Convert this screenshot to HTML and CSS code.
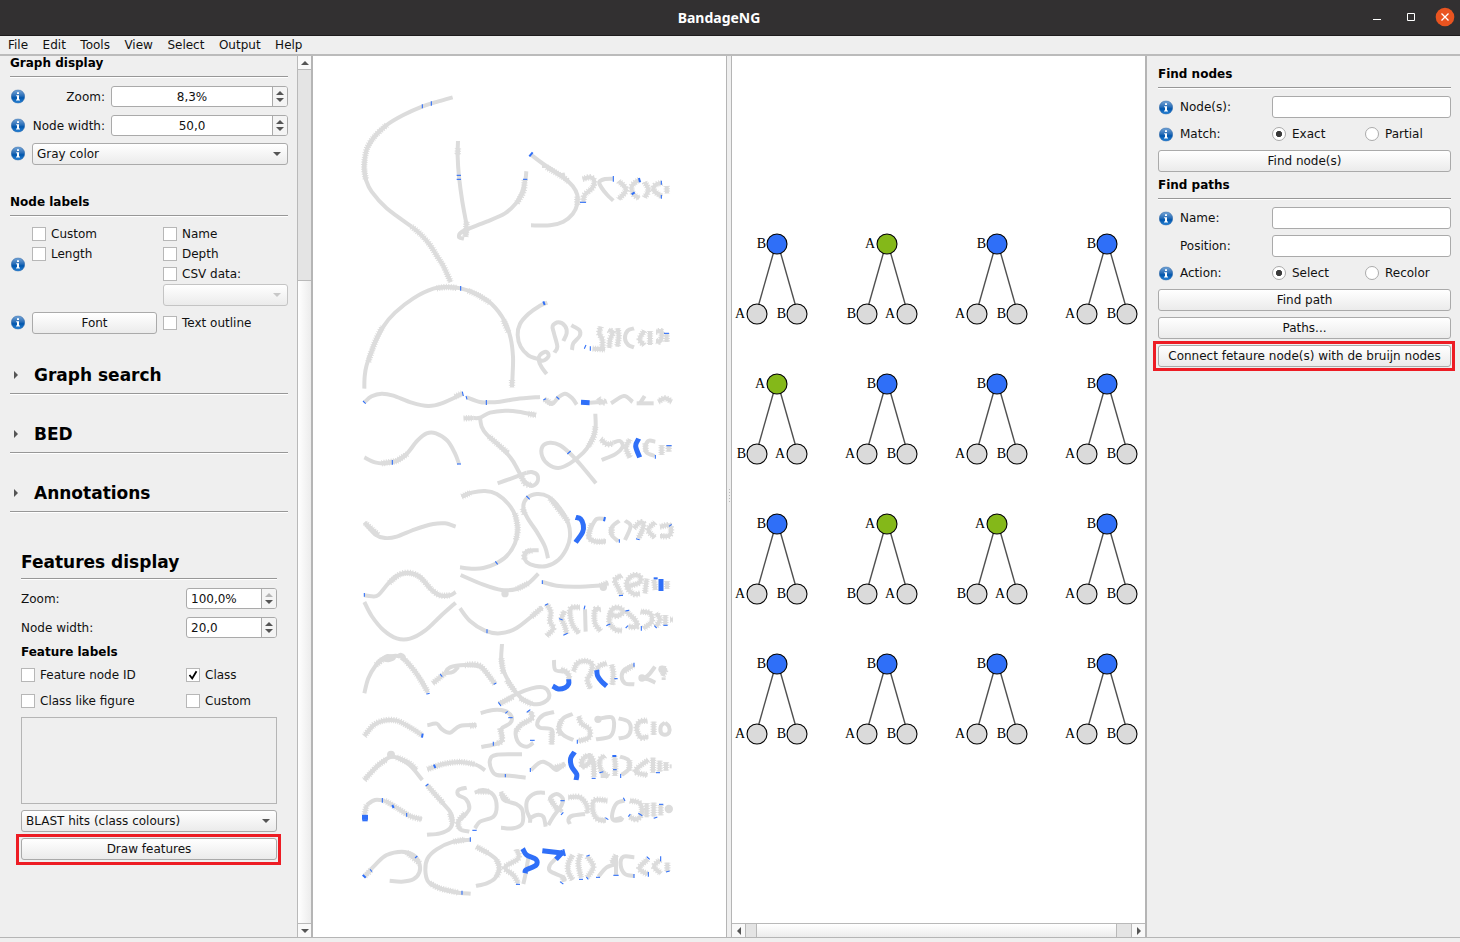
FILE: index.html
```html
<!DOCTYPE html>
<html lang="en">
<head>
<meta charset="utf-8">
<title>BandageNG</title>
<link rel="stylesheet" href="styles.css">
</head>
<body>
<svg class="defs" width="0" height="0">
  <defs>
    <linearGradient id="info-fill" x1="0" y1="0" x2="0" y2="1">
      <stop offset="0" stop-color="#78a7d8"/><stop offset=".45" stop-color="#2b6fb8"/><stop offset=".6" stop-color="#0056ad"/><stop offset="1" stop-color="#2c86d8"/>
    </linearGradient>
    <symbol id="info" viewBox="0 0 14 14">
      <circle cx="7" cy="7" r="6.7" fill="url(#info-fill)" stroke="#2c65a4" stroke-width=".5"/>
      <path d="M6 2.8h2v1.7H6zM5.2 5.7H8v4.2h1v1.2H5V9.9h1V6.8h-.8z" fill="#fff"/>
    </symbol>
    <symbol id="up" viewBox="0 0 8 4"><path d="M0 4L4 0l4 4z"/></symbol>
    <symbol id="down" viewBox="0 0 8 4"><path d="M0 0l4 4 4-4z"/></symbol>
    <symbol id="left" viewBox="0 0 4 8"><path d="M4 0L0 4l4 4z"/></symbol>
    <symbol id="right" viewBox="0 0 4 8"><path d="M0 0l4 4-4 4z"/></symbol>
  </defs>
</svg>
<div class="window">
  <header class="titlebar">
    <span class="side"></span>
    <span class="title">BandageNG</span>
    <span class="side controls">
      <svg width="90" height="36" viewBox="0 0 90 36"><path d="M7 19.5h8" stroke="#fff" fill="none"/><path d="M41.500 13.500h7v7h-7z" stroke="#fff" fill="none"/><circle cx="79" cy="17" r="9.300" fill="#e95420"/><path d="M75.500 13.500l7 7m0-7l-7 7" stroke="#fff" stroke-width="1.300"/></svg>
    </span>
  </header>
  <nav class="menubar"><span>File</span><span>Edit</span><span>Tools</span><span>View</span><span>Select</span><span>Output</span><span>Help</span></nav>
  <main class="work">
    <aside class="left">
      <h3>Graph display</h3>
      <div class="row r-zoom"><svg class="info"><use href="#info"/></svg><label class="rlabel">Zoom:</label><div class="spin center"><span>8,3%</span><i><svg><use href="#up"/></svg><svg><use href="#down"/></svg></i></div></div>
      <div class="row r-width"><svg class="info"><use href="#info"/></svg><label class="rlabel">Node width:</label><div class="spin center"><span>50,0</span><i><svg><use href="#up"/></svg><svg><use href="#down"/></svg></i></div></div>
      <div class="row r-color"><svg class="info"><use href="#info"/></svg><div class="combo"><span>Gray color</span><svg><use href="#down"/></svg></div></div>
      <h3 class="labels-title">Node labels</h3>
      <div class="row labels">
        <svg class="info"><use href="#info"/></svg>
        <div class="col"><div class="check"><b></b>Custom</div><div class="check"><b></b>Length</div></div>
        <div class="col"><div class="check"><b></b>Name</div><div class="check"><b></b>Depth</div><div class="check"><b></b>CSV data:</div><div class="combo off"><span></span><svg><use href="#down"/></svg></div></div>
      </div>
      <div class="row r-font"><svg class="info"><use href="#info"/></svg><div class="btn">Font</div><div class="check"><b></b>Text outline</div></div>
      <h2 class="first"><svg><use href="#right"/></svg>Graph search</h2>
      <h2><svg><use href="#right"/></svg>BED</h2>
      <h2><svg><use href="#right"/></svg>Annotations</h2>
      <section class="features">
        <h2>Features display</h2>
        <div class="row r-zoom"><label>Zoom:</label><div class="spin"><span>100,0%</span><i><svg class="dim"><use href="#up"/></svg><svg><use href="#down"/></svg></i></div></div>
        <div class="row r-width"><label>Node width:</label><div class="spin"><span>20,0</span><i><svg><use href="#up"/></svg><svg><use href="#down"/></svg></i></div></div>
        <h4>Feature labels</h4>
        <div class="checks">
          <div class="check"><b></b>Feature node ID</div><div class="check"><b><svg viewBox="0 0 12 12"><path d="M2.500 6l2.700 3.500L9.500 2.300" fill="none" stroke="#000" stroke-width="1.800"/></svg></b>Class</div>
          <div class="check"><b></b>Class like figure</div><div class="check"><b></b>Custom</div>
        </div>
        <div class="blank"></div>
        <div class="combo"><span>BLAST hits (class colours)</span><svg><use href="#down"/></svg></div>
        <div class="btn marked draw">Draw features</div>
      </section>
    </aside>
    <div class="vscroll"><i class="arrow"><svg><use href="#up"/></svg></i><i class="trough"></i><i class="thumb"></i><i class="arrow"><svg><use href="#down"/></svg></i></div>
    <div class="view graph"><svg id="graph" width="413" height="881" viewBox="313 56 413 881"></svg></div>
    <div class="splitter"><i></i></div>
    <div class="view trees">
      <svg id="trees" width="413" height="867" viewBox="732 56 413 867"></svg>
      <div class="hscroll"><i class="arrow"><svg><use href="#left"/></svg></i><i class="trough a"></i><i class="thumb"></i><i class="trough b"></i><i class="arrow"><svg><use href="#right"/></svg></i></div>
    </div>
    <aside class="find">
      <h3>Find nodes</h3>
      <div class="row r-input"><svg class="info"><use href="#info"/></svg><label>Node(s):</label><div class="input"></div></div>
      <div class="row r-radio"><svg class="info"><use href="#info"/></svg><label>Match:</label><div class="radio on"><b></b>Exact</div><div class="radio"><b></b>Partial</div></div>
      <div class="btn after-radio">Find node(s)</div>
      <h3 class="paths-title">Find paths</h3>
      <div class="row r-input"><svg class="info"><use href="#info"/></svg><label>Name:</label><div class="input"></div></div>
      <div class="row r-pos"><span class="info"></span><label>Position:</label><div class="input"></div></div>
      <div class="row r-radio"><svg class="info"><use href="#info"/></svg><label>Action:</label><div class="radio on"><b></b>Select</div><div class="radio"><b></b>Recolor</div></div>
      <div class="btn after-radio">Find path</div>
      <div class="btn">Paths...</div>
      <div class="btn marked">Connect fetaure node(s) with de bruijn nodes</div>
    </aside>
  </main>
  <footer class="status"></footer>
</div>
<script src="graph.js"></script>
</body>
</html>
```

FILE: styles.css
```css
* { box-sizing: border-box; }
body { margin: 0; font: 12px/14px "DejaVu Sans", sans-serif; color: #111; background: #efefef; }
svg { display: block; }
.defs { position: absolute; }
.window { display: flex; flex-direction: column; width: 1460px; height: 942px; overflow: hidden; }
.titlebar { display: flex; align-items: center; height: 36px; padding: 0 5px 0 0; background: #323031; border-bottom: 1px solid #1d1b1c; }
.side { flex: 1; display: flex; justify-content: flex-end; }
.side:first-child { margin-right: -17px; }
.title { color: #fff; font: bold 14px "Noto Sans", sans-serif; }
.controls svg { margin-right: -1px; }
.menubar { display: flex; height: 20px; padding: 1px 8px 0; gap: 14.500px; line-height: 16px; border-bottom: 2px solid #bbb; }
.work { display: flex; height: 881px; }
.status { height: 5px; border-top: 1px solid #b5b5b5; }

.left { width: 297px; padding: 0 9px 0 10px; }
h2, h3, h4 { margin: 0; font-weight: bold; color: #000; }
h3 { height: 21px; font-size: 12px; line-height: 15px; border-bottom: 1px solid #979797; box-shadow: 0 1px #fff; }
h2 { display: flex; align-items: center; height: 32px; margin-top: 27px; padding: 0 0 5px 4px; font-size: 17px; line-height: 26px; border-bottom: 1px solid #979797; box-shadow: 0 1px #fff; }
h2 svg { width: 4px; height: 8px; margin-right: 16px; fill: #555; }
h2.first { margin-top: 28px; }
h4 { height: 14px; margin-top: 7px; font-size: 12px; }
.row { display: flex; align-items: center; }
.row label { flex: none; white-space: nowrap; }
.info { flex: none; width: 14px; height: 14px; margin: 0 7px 0 1px; }
.left .info { margin: 0 8px 0 0; transform: translate(1px, -.5px); }
.find .info { transform: translate(0, .5px); }
.rlabel { width: 73px; margin-right: 6px; text-align: right; }
.r-zoom { height: 21px; margin-top: 9px; }
.r-width { height: 21px; margin-top: 8px; }
.r-color { height: 22px; margin-top: 7px; }
.labels-title { margin-top: 30px; }
.labels { margin-top: 8px; height: 82px; }
.col { align-self: stretch; width: 125px; }
.col + .col { margin-left: 6px; }
.col .check { height: 20px; }
.r-font { height: 22px; margin-top: 6px; }
.r-font .btn { width: 125px; margin: 0 6px 0 0; }

.spin { display: flex; flex: 1; height: 21px; background: #fff; border: 1px solid #aaa; border-radius: 3px; overflow: hidden; }
.spin span { flex: 1; padding-left: 4px; line-height: 21px; }
.spin.center span { text-align: center; padding: 0; }
.spin i { display: flex; flex-direction: column; align-items: center; justify-content: center; gap: 3px; width: 15px; border-left: 1px solid #aaa; background: #f4f4f4; }
.spin svg { width: 8px; height: 4px; fill: #555; }
.spin svg.dim { fill: #b5b5b5; }
.combo, .btn { height: 22px; border: 1px solid #aaa; border-radius: 3px; background: linear-gradient(#fff, #ebebeb); line-height: 19px; }
.combo { display: flex; flex: 1; align-items: center; justify-content: space-between; padding: 0 6px 0 4px; }
.combo svg { width: 8px; height: 4px; fill: #555; }
.combo.off { border-color: #c4c4c4; }
.combo.off svg { fill: #c8c8c8; }
.btn { text-align: center; margin-top: 6px; line-height: 21px; white-space: nowrap; }
.check { display: flex; align-items: center; height: 14px; white-space: nowrap; }
.check b { width: 14px; height: 14px; margin-right: 5px; border: 1px solid #b7b7b7; background: #fff; }
.features { padding: 0 11px; }
.features h2 { height: 30px; margin-top: 37px; padding: 0 0 4px; }
.features .row { justify-content: space-between; }
.features .spin { flex: none; width: 91px; }
.checks { display: grid; grid-template-columns: 165px 1fr; row-gap: 12px; margin-top: 9px; }
.blank { height: 87px; margin: 9px 0 6px; border: 1px solid #b5b5b5; }
.marked { position: relative; }
.marked::after { content: ""; position: absolute; inset: -5px -5px -5px -6px; border: 3px solid #ed1c24; }
.marked.draw::after { bottom: -6px; }

.arrow { display: flex; align-items: center; justify-content: center; background: #f9f9f9; }
.vscroll { display: flex; flex-direction: column; width: 16px; border-left: 1px solid #b9b9b9; border-right: 2px solid #b5b5b5; }
.vscroll .arrow { height: 13px; }
.vscroll .arrow svg { width: 8px; height: 4px; fill: #555; }
.vscroll .trough { height: 212px; border: 1px solid #b9b9b9; border-width: 1px 0; background: #e4e4e4; }
.vscroll .thumb { flex: 1; background: linear-gradient(90deg, #fff, #ececec); border-bottom: 1px solid #b9b9b9; }
.view { width: 413px; background: #fff; }
.splitter { display: flex; align-items: center; justify-content: center; width: 6px; border: 1px solid #b5b5b5; border-width: 0 1px; }
.splitter i { width: 1px; height: 15px; background: repeating-linear-gradient(#bbb 0 1px, transparent 1px 3px); }
.hscroll { display: flex; height: 14px; border-top: 1px solid #b9b9b9; }
.hscroll .arrow { width: 13px; }
.hscroll .arrow svg { width: 4px; height: 8px; fill: #555; }
.hscroll .trough { background: #e4e4e4; border: 1px solid #b9b9b9; border-width: 0 1px; }
.hscroll .a { width: 12px; }
.hscroll .b { width: 16px; }
.hscroll .thumb { flex: 1; background: linear-gradient(#fff, #ececec); }

.find { width: 315px; padding: 11px 9px 0 11px; border-left: 2px solid #b5b5b5; }
.find label { width: 92px; }
.find .row { height: 22px; }
.find .r-input { margin-top: 8px; }
.find .r-pos { margin-top: 6px; }
.find .r-radio { height: 14px; margin-top: 9px; }
.find .after-radio { margin-top: 9px; }
.paths-title { margin-top: 6px; }
.input { flex: 1; height: 22px; background: #fff; border: 1px solid #aaa; border-radius: 3px; }
.radio { display: flex; flex: none; align-items: center; width: 93px; }
.radio:last-child { width: 86px; }
.radio b { width: 14px; height: 14px; margin-right: 6px; border: 1px solid #aaa; border-radius: 50%; background: #fff; }
.radio.on b { background: radial-gradient(circle, #3a3a3a 0 2.800px, #fff 3.500px); }

#graph path { fill: none; }
.g { stroke: #dcdcdc; stroke-width: 12; }
.hair { stroke: #dcdcdc; stroke-width: 19; stroke-dasharray: 3 4; }
.b { stroke: #2f6ff8; stroke-width: 15; }
.t { stroke: #2f6ff8; stroke-width: 3.300; }
.edge { stroke: #505050; stroke-width: 1.400; }
.node { stroke: #000; stroke-width: 1.100; }
.node.A { fill: #84b819; }
.node.B { fill: #2f6ff8; }
.node.leaf { fill: #dadada; }
#trees text { font: 14px "Liberation Serif", serif; text-anchor: end; fill: #000; }
```

FILE: graph.js
```javascript
// Contigs by band; coordinates are thirds of a pixel from the band's top edge.
// g: plain contig, f: contig with short segments, b/w: highlighted contig, t: feature tick.
const bands = {
  80: `g 308,52 265,64 218,79 160,105 110,135 75,168 52,203
f 110,135 75,168 52,203 44,240 43,270 48,300
g 44,240 43,270 48,300 65,335 110,385 185,440
f 185,440 212,463 240,495 262,530 280,558 302,606
g 324,183 323,230 327,290 337,365 350,435
f 324,205 323,225
f 350,425 346,470
g 529,274 526,300 515,340 498,370 465,400 410,425 350,448 330,460 328,473 342,476
f 350,448 346,470
f 524,300 520,335 500,370
g 543,224 580,252 640,292 668,318 682,345 682,372 668,402 640,425 600,436 543,436
f 590,262 640,292 655,305
g 576,258 588,258
g 627,287 645,283
f 682,350 682,375
f 698,297 722,292 733,305 726,325 704,345 700,366
g 790,296 765,297 748,306 754,322 772,345 790,362
f 806,303 828,329 806,358
f 868,298 846,318 850,342 868,355
f 884,306 895,330 884,353
f 936,308 915,316 912,332 936,350
f 950,318 951,340
t 217,73 217,85
t 244,64 244,77
t 320,286 333,286
t 320,298 333,298
t 519,298 532,298
w 548,217 538,229
t 690,367 708,367
t 790,288 790,305
w 867,294 870,307
w 845,343 854,337
t 934,302 934,314
t 934,345 934,356`,
  270: `g 43,356 44,320 50,285 70,230 100,170 135,128 190,85 250,56 295,52 332,55 375,70 425,102 465,155 482,205 489,260 488,310 486,350
f 55,275 68,235 82,200 98,170
f 260,55 290,51 320,54
f 355,62 385,76 420,98
f 460,150 475,185
f 486,330 486,352
g 592,98 570,107 535,132 510,162 503,195 512,230 535,256 560,266 580,272 596,258 588,245 570,255 566,270 575,292 590,312
g 613,248 622,230 612,190 608,168 625,157 645,168 650,190 640,213
g 664,166 688,180 689,198 670,220 666,240
f 728,236 765,238
f 752,170 748,190 757,210 757,240
f 775,180 788,187 780,210 778,234
f 803,175 806,200 802,230
g 852,175 833,182 825,205 835,225 852,232
f 883,182 869,208 883,226
f 900,183 900,225
f 918,185 935,185 931,213 918,213
f 950,190 950,216
g 43,397 65,379 95,371 130,377 185,398 235,408 275,400 337,372
f 315,380 337,370
g 350,382 390,396 415,397 450,395 500,387 570,381
g 583,388 606,402 625,382 645,371 666,384 680,404
f 583,388 606,402
g 720,398 760,395
f 745,384 755,398 770,392
g 783,400 822,378 848,396
g 884,378 870,400
g 860,400 911,400
f 925,395 945,385 965,395
f 341,445 370,444
g 370,444 390,443 420,428 465,422 505,425 558,435
f 535,432 558,435
g 390,443 395,470 410,493 440,520 475,555 490,575 512,615 525,635 545,648 562,636 562,615 545,606 530,608
g 530,608 485,625 443,640
f 417,500 440,520 475,550
f 512,615 525,640 545,645
g 43,562 75,577 105,580 140,573 170,552 202,512 230,490 258,490 292,512 315,550 327,582
f 140,573 172,552
f 95,580 140,573
g 736,431 736,480 720,520 700,548 660,580 625,594 595,583 577,560 577,530 600,518 630,526 665,555 700,594 738,640
f 736,470 731,500 715,530
g 755,570 795,553 818,530 810,513 790,518
f 752,507 770,522 790,520
f 840,508 828,533 840,563
g 916,515 896,512 886,530 890,548 914,558
f 886,520 888,545
f 935,525 935,555
f 956,527 956,545
b 866,506 857,528 869,562
b 693,397 719,398
t 332,48 332,62
w 580,94 584,105
t 39,393 47,401
t 337,365 340,378
t 348,378 351,388
t 409,390 409,405
t 580,390 588,386
t 619,380 628,388
t 708,225 703,236
t 721,229 721,242
t 942,190 957,190
t 127,570 127,584
t 321,582 333,582
t 652,552 662,543
t 949,527 965,527
t 916,555 916,566`,
  480: `g 43,127 75,163 105,174 140,170 195,148 250,132 285,130 317,140
f 45,129 85,165
g 335,50 365,38 405,33 440,42 475,72 495,105 503,145 495,190 470,228 435,252 400,264 370,266 330,262
f 335,50 362,38
f 495,100 503,145 498,180
g 566,211 535,212 523,228 530,246 555,257 590,258 625,240 650,205 660,170 655,130 630,85 595,50 560,42 530,55 520,82 533,115 560,155 585,200 594,235
f 545,211 525,220 524,240
f 518,85 524,103
f 600,55 655,125
g 764,117 740,117 725,140 715,170 735,184 768,184
f 725,130 717,170 735,184 768,184
g 808,122 785,142 785,165 805,184
f 785,142 785,165
g 825,122 842,138 825,180
f 852,145 868,128 880,130 877,150 865,175
f 915,127 895,150 915,173
f 930,140 958,136 963,155 955,168 930,168
g 43,346 65,349 85,345 115,310 140,287 175,280 210,290 245,330 270,346 300,346 317,336
f 118,308 150,283 180,279 210,292 243,328
f 245,330 270,346 300,346
g 332,285 400,314 455,330 500,327 535,310 565,281
w0 455,341 475,341
f 500,327 535,310
g 577,306 620,317 680,320 770,315
w0 750,322 770,322
f 750,318 775,308
f 815,286 795,300 805,325 815,346
f 830,320 868,308 870,290 850,286 832,303 833,325 852,342 870,341
f 890,296 885,340
f 912,299 916,330
f 951,304 951,327
g 43,366 65,408 100,450 140,475 180,476 225,452 270,410 317,368
g 330,385 360,423 405,452 450,460 500,444 577,382
f 545,410 577,382
f 590,373 602,395 600,425 610,445 590,468
f 644,393 635,415 645,440 650,462
f 690,382 665,383 660,400 668,435 688,460
g 705,388 707,455
f 752,387 735,390 735,430 752,453
f 775,400 800,408 820,395 805,383 785,390 778,425 795,448 816,452
f 829,395 855,420 860,440 835,440
f 872,395 900,400 905,425 880,445
f 918,400 930,418 918,440
f 946,405 946,435
f 960,419 969,419
b 677,112 692,117 700,135 698,156 677,187
b 933,297 933,333
t 529,48 539,58
t 436,244 443,253
t 808,178 808,188
w 765,111 762,124
t 858,176 869,179
t 957,139 965,133
t 43,339 43,350
t 577,301 577,312
t 411,448 411,460
t 585,376 594,371
t 627,416 638,420
t 640,466 653,460
t 807,347 819,346
t 705,377 702,388
w 911,295 923,295
t 826,393 838,391
t 769,437 781,432
t 874,438 874,452
t 827,444 834,437
t 913,437 920,444
t 940,436 953,436`,
  630: `g 43,190 55,145 78,105 100,85 150,79 180,105 210,145 234,188
f 78,105 98,88
f 165,90 195,125 232,183
g 95,88 112,78 132,83 115,91 98,88
g 142,80 152,74 162,82 155,92
f 248,160 285,130
g 285,130 300,112 345,105 390,110 410,130 435,162
f 345,105 390,108 435,162
g 285,130 310,125 325,110
g 456,42 454,100 470,143 500,190 525,212 560,223 592,210 597,190 580,172 545,175 500,192 450,220
f 454,85 460,130
f 448,222 490,200
f 510,205 545,222
f 470,150 495,185
g 612,90 616,120 645,125 658,140 656,152
f 632,118 652,128 658,145
f 670,124 682,100 705,93 726,103 722,130 712,150 722,176
f 770,100 748,108 740,122
f 785,104 790,130 787,165
g 853,105 825,118 815,138 825,160 853,163
f 850,106 820,125
w0 866,144 886,144
g 868,142 895,148 916,158
g 886,143 900,130 915,110
w0 926,118 947,118
f 928,118 946,118 937,138
g 941,142 941,150
f 43,318 70,286 100,272 140,272 180,292 217,316
g 232,286 260,281 275,297 300,308 330,288 378,285
f 360,288 380,285
g 392,249 430,240 465,243 485,260 480,280 455,296 457,325 445,340 394,351
f 450,295 456,330 440,341
g 541,244 545,265 515,283 497,305 505,337 530,350 550,338
f 541,244 545,265 515,283 497,305
g 612,246 580,255 562,278 570,293 606,300 605,343
f 605,305 605,343
g 668,252 640,265 626,290 640,315 670,330
f 635,270 626,300 635,315
f 686,259 694,280 718,298 716,323 685,333
w0 734,268 754,268
g 748,266 785,262 792,290 780,320 738,328
g 806,265 835,275 842,300 830,320 806,325
f 892,272 870,275 860,295 872,322 895,320
f 911,275 911,315
g 945,278 933,288 933,308 945,314 957,308 957,290 945,278
b 608,168 625,177 645,173 656,162 656,148
b 740,120 743,138 755,155 770,168
t 270,132 277,140
t 431,163 439,159
t 229,192 239,190
t 445,217 453,228
t 852,98 852,110
t 793,146 803,146
w 218,311 216,323
t 466,250 473,244
t 475,263 488,263
t 430,335 430,347
t 530,247 541,239
t 540,331 554,331
t 682,329 682,341`,
  740: `g 43,120 80,80 125,50 175,72 217,120
f 43,120 80,80 110,58
f 140,52 175,68 200,90
w0 112,44 134,44
f 232,88 280,72 330,66 375,73
g 375,73 390,80 405,91
g 516,43 440,44 420,60 425,90 440,105 480,107 527,113
g 543,90 565,70 580,65 600,75 620,90 645,70
f 610,84 645,74
g 712,45 697,60 697,78 710,75 722,60 718,45 730,65 732,110
f 712,45 697,60 697,78 710,75 722,60 718,45 730,65 732,110
f 765,47 750,60 753,90 775,110
g 752,108 775,108
f 793,50 796,75 795,108
g 810,50 835,60 838,85 815,105
f 838,60 838,92
f 895,60 862,85 860,98 893,105
f 909,53 909,98
f 929,62 929,95
f 948,67 948,92
g 959,79 965,79
f 43,225 50,195
g 50,195 75,180 105,182
f 105,182 140,203 180,228 216,238
g 230,134 270,180 300,215 308,240 300,265 270,280 231,284
f 235,140 280,190
f 300,220 308,250
g 350,143 325,150 325,165 348,178 358,205 345,225 325,245 330,268 358,275
f 345,220 325,245 328,265
g 374,158 400,150 430,165 440,200 430,230 390,245 375,265
f 385,155 420,155
g 453,155 462,180 500,193 517,210 517,250 490,265 453,263
f 453,160 475,185
g 585,158 555,160 532,180 530,210 540,235 540,248
g 540,235 560,225 580,230 587,260
g 595,255 610,230 635,195 638,175 620,162 600,175 612,195 637,215
f 600,175 625,215
f 655,172 690,172 712,200 710,220
g 705,222 665,228 655,240 660,252
f 772,182 735,180 728,205 740,235 768,242
g 768,242 745,240
g 823,182 800,190 787,220 790,240 812,240 818,232
g 790,240 815,233
f 840,182 870,190 875,220 860,238 838,230
g 840,182 850,184
f 890,190 890,232
f 911,188 911,230
f 932,195 932,226
w0 945,207 968,207
g 43,410 80,370 110,345 155,335 190,345 208,370 208,397 190,418 155,425 119,422
f 45,408 65,388
f 170,337 210,370
g 362,299 310,305 260,328 233,355 226,390 235,425 270,445 325,458 362,461
f 310,305 345,299
f 240,430 270,445 325,458
g 379,320 415,340 440,360 448,385 435,415 410,430 378,438
f 379,320 415,340
f 440,360 448,385 440,410
f 500,328 505,355 465,382 490,405 505,430
g 535,353 527,400 520,432
g 618,355 600,375 600,393 640,412 642,425
f 636,407 642,425
f 668,345 655,370 655,395 668,420
f 692,342 685,370 693,413
f 712,350 730,380 712,412
g 745,410 770,382 802,372
g 798,345 798,405
f 798,345 785,370
g 853,352 820,350 812,375 825,402 852,408
f 893,358 868,385 893,403
f 930,360 912,380 933,400
f 952,368 952,395
b 674,36 662,55 665,80 680,102 678,120
b 36,232 54,232
w 37,241 53,241
b 518,326 530,345 558,358 558,376 528,390 526,400
b 577,332 642,340
b 640,334 618,358
w 640,328 645,348
t 227,138 235,132
w 252,74 256,84
t 466,102 466,112
t 541,84 541,96
w 787,48 799,48
t 748,98 760,95
t 789,89 800,89
t 725,115 737,115
t 812,102 812,114
t 918,98 930,98
t 97,174 97,188
w 127,195 131,204
t 170,219 170,230
t 367,271 380,271
t 631,182 644,182
t 633,225 640,217
t 766,233 775,239
t 820,173 825,183
t 835,230 841,222
t 865,220 877,227
t 911,235 922,231
t 927,193 940,193
t 361,292 361,305
w 38,405 47,413
t 60,388 66,395
t 195,354 202,348
t 336,452 336,464
t 498,433 510,433
t 630,425 640,432
t 687,418 699,418
t 709,349 719,345
t 709,411 715,418
t 738,412 750,412
t 790,406 806,406
t 852,402 852,414
t 890,350 899,358
t 895,396 895,410
t 932,349 932,364
t 948,396 959,393`
};

const NS = 'http://www.w3.org/2000/svg';
function add(parent, tag, attrs, text) {
  const el = document.createElementNS(NS, tag);
  for (const k in attrs) el.setAttribute(k, attrs[k]);
  if (text) el.textContent = text;
  parent.appendChild(el);
  return el;
}

// Catmull-Rom spline through the given points.
function smooth(p) {
  let d = `M${p[0]}`;
  for (let i = 0; i < p.length - 1; i++) {
    const a = p[i - 1] || p[i], b = p[i], c = p[i + 1], e = p[i + 2] || c;
    d += `C${b[0] + (c[0] - a[0]) / 6},${b[1] + (c[1] - a[1]) / 6} ${c[0] - (e[0] - b[0]) / 6},${c[1] - (e[1] - b[1]) / 6} ${c}`;
  }
  return d;
}

const graph = document.getElementById('graph');
for (const top in bands) {
  const g = add(graph, 'g', { transform: `translate(350 ${top}) scale(.33333)` });
  for (const line of bands[top].split('\n')) {
    const [kind, ...raw] = line.split(' ');
    const pts = raw.map(s => s.split(',').map(Number));
    if (kind === 'w0') {
      // Bulge in a contig: a filled disc spanning the two points.
      const [a, b] = pts;
      add(g, 'circle', { cx: (a[0] + b[0]) / 2, cy: a[1], r: (b[0] - a[0]) / 2 + 1, fill: '#dcdcdc' });
      continue;
    }
    const d = smooth(pts);
    if (kind === 'f') add(g, 'path', { d, class: 'hair' });
    const attrs = { d, class: { f: 'g', w: 't' }[kind] || kind };
    if (kind === 'w') attrs.style = 'stroke-width:6';
    add(g, 'path', attrs);
  }
}

const trees = document.getElementById('trees');
['BABB', 'ABBB', 'BAAB', 'BBBB'].forEach((row, j) => [...row].forEach((kind, i) => {
  const x = 777 + 110 * i, y = 244 + 140 * j;
  const kids = kind === 'A' ? 'BA' : 'AB';
  const label = (cx, cy, text) => add(trees, 'text', { x: cx - (text === 'A' ? 12 : 11), y: cy + 4 }, text);
  [-20, 20].forEach((dx, k) => {
    add(trees, 'line', { x1: x + dx * .18, y1: y + 9, x2: x + dx * .92, y2: y + 61, class: 'edge' });
    add(trees, 'circle', { cx: x + dx, cy: y + 70, r: 10, class: 'node leaf' });
    label(x + dx, y + 70, kids[k]);
  });
  add(trees, 'circle', { cx: x, cy: y, r: 10, class: `node ${kind}` });
  label(x, y, kind);
}));
```
